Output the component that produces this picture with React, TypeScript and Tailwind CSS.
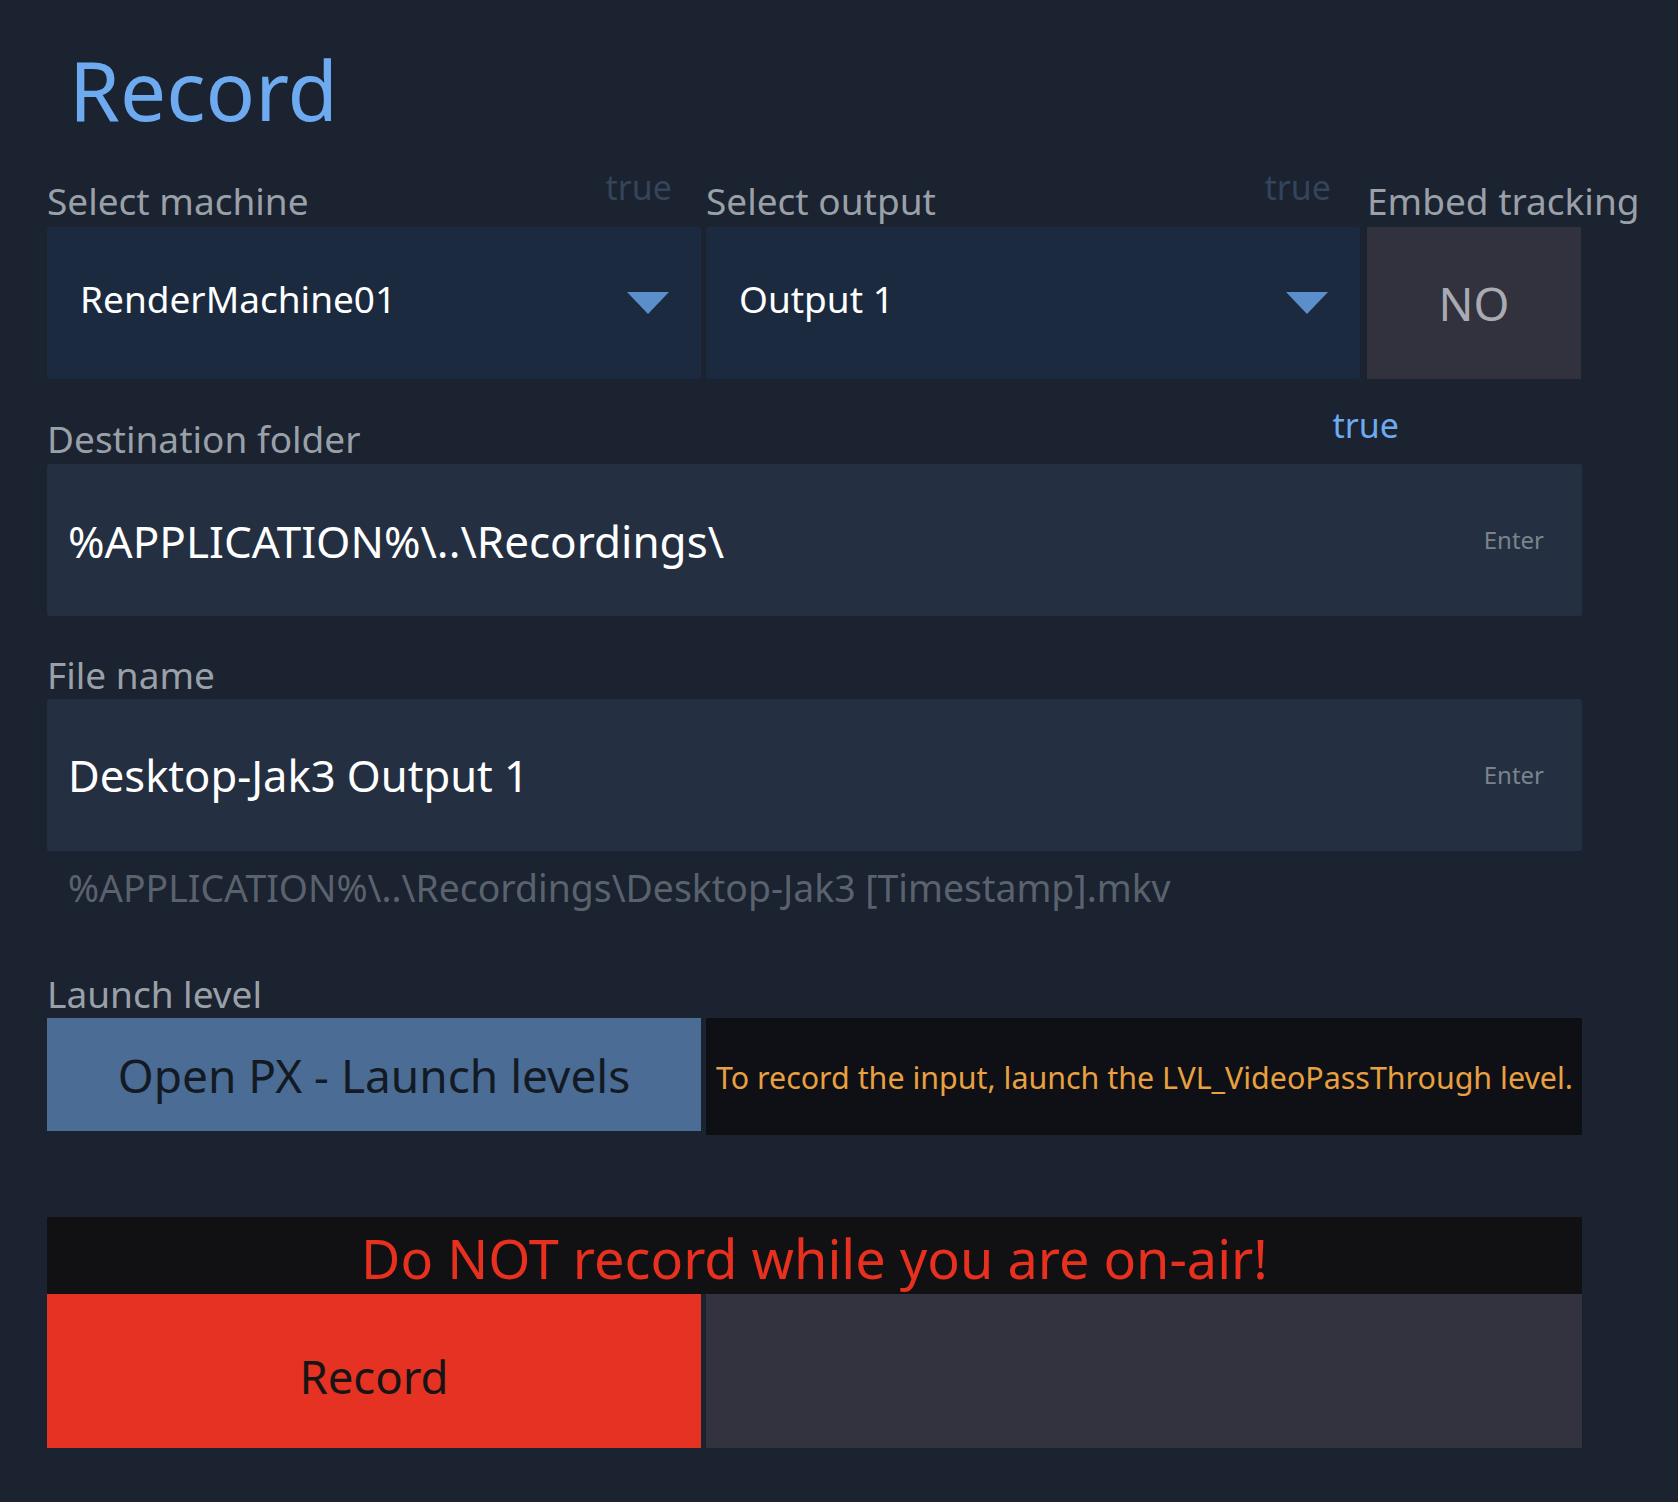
import React from 'react';

const font = { fontFamily: '"Noto Sans", "Open Sans", sans-serif' };

function Caret() {
  return (
    <svg width="42" height="22" viewBox="0 0 42 22" className="shrink-0">
      <path d="M0 0 H42 L21 22 Z" fill="#5b8fcc" />
    </svg>
  );
}

function SelectField({ label, value }: { label: string; value: string }) {
  return (
    <div className="w-[654px] shrink-0">
      <div className="flex h-[37px] items-start justify-between mb-[8px]">
        <span className="text-[37px] leading-none text-[#9aa0a8]">{label}</span>
        <span className="text-[34px] leading-none text-[#34445a] mt-[-12px] mr-[29px]">true</span>
      </div>
      <div className="h-[152px] bg-[#1c2a3f] rounded-[3px] flex items-center justify-between pl-[33px] pr-[32px]">
        <span className="text-[37px] leading-none text-white mb-[10px]">{value}</span>
        <Caret />
      </div>
    </div>
  );
}

function InputField({ value, size }: { value: string; size: string }) {
  return (
    <div className="h-[152px] bg-[#243041] rounded-[3px] flex items-center justify-between pl-[21px] pr-[38px]">
      <span className={`${size} leading-none text-white mt-[2px]`}>{value}</span>
      <span className="text-[24px] leading-none text-[#7b838d]">Enter</span>
    </div>
  );
}

export default function App() {
  return (
    <main className="min-h-screen bg-[#1b2230] pl-[47px] pt-[48px] pb-[56px]" style={font}>
      <div className="w-[1535px]">
        <h1 className="text-[82px] leading-none text-[#6eaaf0] ml-[22px]">Record</h1>

        <div className="mt-[52px] flex items-start">
          <SelectField label="Select machine" value="RenderMachine01" />
          <div className="w-[5px] shrink-0" />
          <SelectField label="Select output" value="Output 1" />
          <div className="ml-[7px] w-[214px] shrink-0">
            <div className="h-[37px] mb-[8px] whitespace-nowrap">
              <span className="text-[37px] leading-none text-[#9aa0a8]">Embed tracking</span>
            </div>
            <div className="h-[152px] bg-[#32323e] flex items-center justify-center">
              <span className="text-[46px] leading-none text-[#a9abb3]">NO</span>
            </div>
          </div>
        </div>

        <div className="mt-[41px]">
          <div className="flex h-[37px] items-start mb-[7px]">
            <span className="text-[37px] leading-none text-[#9aa0a8]">Destination folder</span>
            <span className="text-[34px] leading-none text-[#6eaaf0] mt-[-12px] ml-auto mr-[183px]">true</span>
          </div>
          <InputField value="%APPLICATION%\..\Recordings\" size="text-[44px]" />
        </div>

        <div className="mt-[40px]">
          <div className="h-[37px] mb-[6px]">
            <span className="text-[37px] leading-none text-[#9aa0a8]">File name</span>
          </div>
          <InputField value="Desktop-Jak3 Output 1" size="text-[43.5px]" />
        </div>

        <p className="mt-[18px] ml-[21px] text-[37.4px] leading-none text-[#5a626d] whitespace-nowrap">
          %APPLICATION%\..\Recordings\Desktop-Jak3 [Timestamp].mkv
        </p>

        <div className="mt-[69px]">
          <div className="h-[37px] mb-[6px]">
            <span className="text-[37px] leading-none text-[#9aa0a8]">Launch level</span>
          </div>
          <div className="flex items-start">
            <button className="w-[654px] h-[113px] shrink-0 bg-[#4a6c95] text-[46px] leading-none text-[#141a24]">
              Open PX - Launch levels
            </button>
            <div className="ml-[5px] flex-1 h-[117px] bg-[#0f1016] flex items-center pl-[10px] whitespace-nowrap">
              <span className="text-[30.4px] leading-none text-[#e8a040] mt-[3px]">
                To record the input, launch the LVL_VideoPassThrough level.
              </span>
            </div>
          </div>
        </div>

        <div className="mt-[82px]">
          <div className="h-[77px] bg-[#111114] flex items-center justify-center">
            <span className="text-[54px] leading-none text-[#e8301f] mt-[4px]">Do NOT record while you are on-air!</span>
          </div>
          <div className="flex h-[154px]">
            <button className="w-[654px] shrink-0 bg-[#e63222] text-[45.5px] leading-none text-[#151515] pt-[10px]">
              Record
            </button>
            <div className="ml-[5px] flex-1 bg-[#33323f]" />
          </div>
        </div>
      </div>
    </main>
  );
}
